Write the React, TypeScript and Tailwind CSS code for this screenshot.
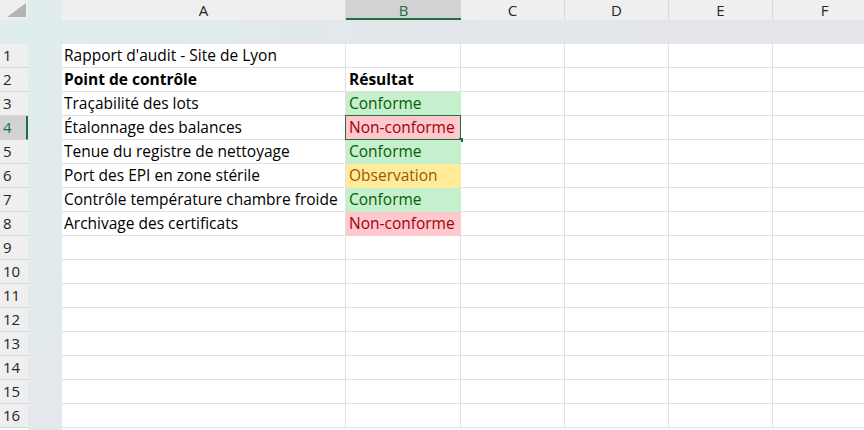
import React from 'react';

type Status = 'ok' | 'ko' | 'obs';

interface Row {
  a?: string;
  b?: string;
  bold?: boolean;
  status?: Status;
}

const rows: Row[] = [
  { a: "Rapport d'audit - Site de Lyon" },
  { a: 'Point de contrôle', b: 'Résultat', bold: true },
  { a: 'Traçabilité des lots', b: 'Conforme', status: 'ok' },
  { a: 'Étalonnage des balances', b: 'Non-conforme', status: 'ko' },
  { a: 'Tenue du registre de nettoyage', b: 'Conforme', status: 'ok' },
  { a: 'Port des EPI en zone stérile', b: 'Observation', status: 'obs' },
  { a: 'Contrôle température chambre froide', b: 'Conforme', status: 'ok' },
  { a: 'Archivage des certificats', b: 'Non-conforme', status: 'ko' },
  {}, {}, {}, {}, {}, {}, {}, {},
];

const statusCls: Record<Status, string> = {
  ok: 'bg-[#c6efce] text-[#006100] border-[#c6efce]',
  ko: 'bg-[#ffc7ce] text-[#9c0006] border-[#ffc7ce]',
  obs: 'bg-[#ffeb9c] text-[#9c5700] border-[#ffeb9c]',
};

const SELECTED_ROW = 4;
const cols = ['C', 'D', 'E', 'F'];

export default function App() {
  return (
    <div className="w-[864px] h-[430px] overflow-hidden bg-white flex flex-col font-['Open_Sans',sans-serif]">
      {/* Column headers */}
      <div className="flex h-[20px] shrink-0 text-[15px] text-[#262626] leading-[20px]">
        <div className="w-[28px] shrink-0 bg-[#efefef] relative">
          <svg width="28" height="20" className="absolute inset-0">
            <polygon points="7,17 26,17 26,3" fill="#b4b4b4" />
          </svg>
        </div>
        <div className="w-[34px] shrink-0 bg-[#e0eced]" />
        <div className="w-[284px] shrink-0 bg-[#efefef] border-r border-[#d9d9d9] text-center">A</div>
        <div className="w-[115px] shrink-0 bg-[#d2d2d2] border-b-2 border-[#1e6e42] text-center text-[#1e6e42]">B</div>
        {cols.map((c) => (
          <div key={c} className="w-[104px] shrink-0 bg-[#efefef] border-r border-[#d9d9d9] text-center">
            {c}
          </div>
        ))}
      </div>

      {/* Frozen band */}
      <div className="h-[24px] shrink-0 bg-gradient-to-r from-[#dfeded] via-[#e3e7eb] to-[#e4e5ea]" />

      {/* Body */}
      <div className="flex flex-1 min-h-0">
        <div className="w-[28px] shrink-0 flex flex-col text-[15px] text-[#262626]">
          {rows.map((_, i) => {
            const n = i + 1;
            const sel = n === SELECTED_ROW;
            return (
              <div
                key={n}
                className={`h-[24px] shrink-0 pl-[3px] leading-[23px] border-b border-[#d6d6d6] ${
                  sel ? 'bg-[#d2d2d2] text-[#1e6e42] border-r-2 border-r-[#1e6e42]' : 'bg-[#efefef]'
                }`}
              >
                {n}
              </div>
            );
          })}
        </div>
        <div className="w-[34px] shrink-0 bg-gradient-to-b from-[#e0eced] to-[#e3e8ec]" />
        <div className="flex flex-col text-[15.5px] text-black">
          {rows.map((r, i) => {
            const n = i + 1;
            return (
              <div key={n} className="flex h-[24px] shrink-0">
                <div
                  className={`w-[284px] shrink-0 px-[2px] leading-[23px] border-r border-b border-[#e1e1e1] whitespace-nowrap ${
                    r.bold ? 'font-bold' : ''
                  }`}
                >
                  {r.a}
                </div>
                <div
                  className={`relative w-[115px] shrink-0 px-[3px] leading-[23px] border-r border-b whitespace-nowrap ${
                    r.status ? statusCls[r.status] : 'border-[#e1e1e1]'
                  } ${r.bold ? 'font-bold' : ''}`}
                >
                  {r.b}
                  {n === SELECTED_ROW && (
                    <>
                      <div className="absolute -inset-px border border-[#1e6e42]" />
                      <div className="absolute right-[-3px] bottom-[-3px] w-[4px] h-[4px] bg-[#1e6e42]" />
                    </>
                  )}
                </div>
                {cols.map((c) => (
                  <div key={c} className="w-[104px] shrink-0 border-r border-b border-[#e1e1e1]" />
                ))}
              </div>
            );
          })}
        </div>
      </div>
    </div>
  );
}
